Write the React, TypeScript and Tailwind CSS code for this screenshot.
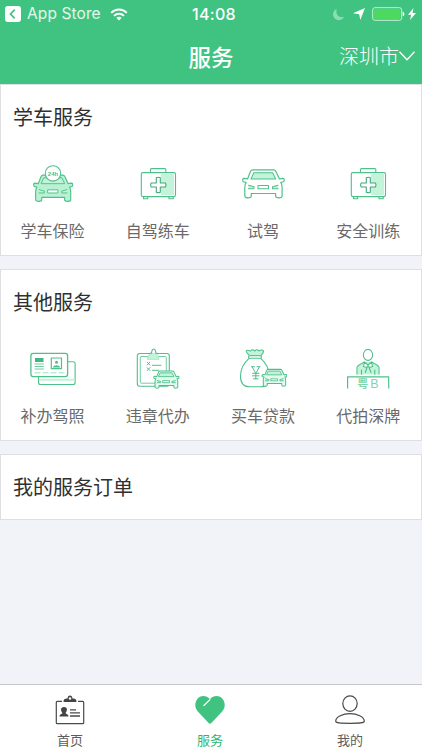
import React from 'react';

interface Service {
  label: string;
  icon: React.ReactNode;
}

const GREEN = '#4fc08c';
const PALE = '#c3f3d9';

function IconBox({ children }: { children: React.ReactNode }) {
  return (
    <svg
      viewBox="0 0 48 48"
      className="w-12 h-12"
      fill="none"
      stroke={GREEN}
      strokeWidth="1.1"
      strokeLinecap="round"
      strokeLinejoin="round"
    >
      {children}
    </svg>
  );
}

function Car({ transform, body = '#fff', width = 1.2 }: { transform?: string; body?: string; width?: number }) {
  return (
    <g transform={transform} strokeWidth={width}>
      <path
        fill={body}
        d="M13.5 9.8h21.2c1 0 1.6.4 2 1.3l3.7 7.8 3.7-.6c1.5 0 1.5 3.5 0 3.7l-2.3.4c1 1.5 1.3 3 1.3 5v8.600c0 2.400-6.500 2.400-6.500 0v-2.500H12.300v2.500c0 2.400-6.500 2.400-6.500 0v-8.600c0-2 .3-3.5 1.3-5l-2.3-.4c-1.5-.2-1.5-3.7 0-3.7l3.700.6 3.200-7.800c.4-.9.800-1.300 1.800-1.300z"
      />
      <path fill={PALE} strokeWidth={width * 0.85} d="M14.8 12.7h18.800l3.200 6.200H12z" />
      <path fill={PALE} strokeWidth={width * 0.85} d="M9.500 25.300l5.500 1.500v2H9.300M39 25.300l-5.500 1.500v2h5.700" />
      <path fill="#fff" strokeWidth={width * 0.85} d="M19 25.500h10.500v3.300H19z" />
    </g>
  );
}

function InsuranceIcon() {
  return (
    <IconBox>
      <Car transform="translate(1.2 5.9) scale(.94)" body="#b9f2d3" />
      <circle cx="24" cy="13.4" r="7.7" fill="#fff" />
      <text
        x="24"
        y="15.6"
        textAnchor="middle"
        fill={GREEN}
        stroke="none"
        className="font-['Liberation_Sans'] text-[6px] font-bold"
      >
        24h
      </text>
    </IconBox>
  );
}

function MedkitIcon() {
  return (
    <IconBox>
      <path fill={PALE} stroke="none" d="M26.800 25V14H40v21H26.800z" />
      <rect x="7.3" y="12.6" width="34.2" height="24" rx="1.5" />
      <path d="M16.500 12.500V9.600c0-.7.3-1 1-1h13.300c.7 0 1 .3 1 1v2.900M9.500 37v1.700h4.200V37M35 37v1.700h4.200V37" />
      <path
        fill="#fff"
        stroke="#45a87b"
        d="M22.300 17.800q2-1 4 0v5.200h5.200q1 2 0 4h-5.200v5.200q-2 1-4 0V27h-5.200q-1-2 0-4h5.200z"
      />
    </IconBox>
  );
}

function TestDriveIcon() {
  return (
    <IconBox>
      <Car />
    </IconBox>
  );
}

function LicenceIcon() {
  return (
    <IconBox>
      <rect x="9.5" y="16.8" width="36.6" height="22.7" rx="2" />
      <path stroke={PALE} strokeWidth="2" d="M11 34.800h34" />
      <rect x="1.9" y="8.3" width="36.7" height="23.3" rx="2.3" fill="#fff" strokeWidth="1.3" />
      <path fill="#43b783" stroke="none" d="M6 13h8.500v4H6z" />
      <path strokeWidth=".8" d="M6 19h8.500M6 21.500h8.500M6 24h8.500" />
      <rect x="22.3" y="13" width="10.2" height="10.6" strokeWidth="1.2" />
      <circle cx="27.5" cy="17.3" r="1.5" fill={GREEN} stroke="none" />
      <path fill={GREEN} stroke="none" d="M24 22.500c0-3 7-3 7 0z" />
      <path stroke="#8fe0b8" strokeWidth=".9" strokeDasharray="5 3" d="M6 27.800h29" />
    </IconBox>
  );
}

function ViolationIcon() {
  return (
    <IconBox>
      <rect x="3.3" y="8.5" width="32" height="32.7" rx="2.5" />
      <rect x="6.3" y="11.5" width="26" height="26.7" rx="1" strokeWidth=".8" />
      <path
        fill={PALE}
        stroke="#9be6c0"
        strokeWidth=".8"
        d="M13.500 14c0-3.500 2.500-5.500 4-5.800h3.500c2 .3 4 2.300 4 5.800z"
      />
      <path fill="#fff" d="M16 8.300h1.500l.3-2c.4-3 3.400-3 3.800 0l.3 2h1.500" />
      <path strokeWidth="1" d="M13.200 17.200l2.600 2.800M15.800 17.200l-2.600 2.800M13.200 22.700l2.600 2.800M15.800 22.700l-2.600 2.800M18.500 20.300h8.500M18.500 25.300h6" />
      <Car transform="translate(17.5 20.1) scale(.61)" body="#e4faee" width={1.7} />
    </IconBox>
  );
}

function LoanIcon() {
  return (
    <IconBox>
      <path
        fill="#fff"
        d="M10.300 13.200C5.500 17.500 1.500 24 1.500 31c0 8 3.500 10.800 9 10.800h11.500c5.500 0 8.300-2.800 8.300-10.800 0-7-4-13.500-8.800-17.800"
      />
      <path
        fill={PALE}
        d="M10.500 10.700c-1.300-1.500-3.900-3.500-3.200-5 1-1.300 3.200 0 4.200.3 1.300-1.600 2.700-1.600 4.200 0 1.500-1.600 2.900-1.600 4.200 0 1.300-1 4-1.500 4.500 0s-1.300 3.200-2.500 4.700z"
      />
      <rect x="9.5" y="10.7" width="13" height="2.5" rx="1.2" fill="#fff" />
      <path strokeWidth="1" d="M12.500 21.700h3M18 21.700h3M13.300 22l3.500 6.500L20.300 22M16.800 28.500v5.300M14.500 33.800h4.600M13.500 28.300h6.600M13.500 30.800h6.600" />
      <Car transform="translate(20.8 18.5) scale(.6)" body="#e4faee" width={1.7} />
    </IconBox>
  );
}

function PlateIcon() {
  return (
    <IconBox>
      <path fill={PALE} stroke="none" d="M13.500 29.500v-7.200c0-1.800 4-3.500 7-5.300h7c3 1.800 7 3.500 7 5.300v7.200z" />
      <path d="M13 29.300v-7c0-2 4.500-3.500 7.500-5.300M35 29.300v-7c0-2-4.500-3.500-7.500-5.300M17.500 25v4.300M30.800 25v4.300" />
      <ellipse cx="24" cy="9.9" rx="4.6" ry="5.5" fill="#fff" />
      <path fill="#fff" d="M20.500 17l3.500 3 3.500-3 1 4.500-3 1-1.500-1.700-1.500 1.700-3-1zM23.300 21.500l-2 6M24.700 21.500l2.300 6" />
      <path strokeWidth="1.2" strokeLinecap="butt" d="M3.600 43.500V31.800h41.100v11.700" />
      <text x="13.3" y="43" fill="#7fd5ac" stroke="none" className="font-['Noto_Sans_CJK_SC'] text-[11px] font-bold">
        粤
      </text>
      <text x="26.3" y="43.3" fill="#7fd5ac" stroke="none" className="font-['Liberation_Sans'] text-[12.5px]">
        B
      </text>
    </IconBox>
  );
}

const learning: Service[] = [
  { label: '学车保险', icon: <InsuranceIcon /> },
  { label: '自驾练车', icon: <MedkitIcon /> },
  { label: '试驾', icon: <TestDriveIcon /> },
  { label: '安全训练', icon: <MedkitIcon /> },
];

const others: Service[] = [
  { label: '补办驾照', icon: <LicenceIcon /> },
  { label: '违章代办', icon: <ViolationIcon /> },
  { label: '买车贷款', icon: <LoanIcon /> },
  { label: '代拍深牌', icon: <PlateIcon /> },
];

function ServiceCard({ title, items }: { title: string; items: Service[] }) {
  return (
    <section className="h-[172px] bg-white border border-[#dfdfe3]">
      <h2 className="pl-3 pt-[17px] text-[20px] leading-[30px] text-[#303030]">{title}</h2>
      <div className="-ml-px mt-7 grid grid-cols-4">
        {items.map((item) => (
          <div key={item.label} className="flex flex-col items-center">
            {item.icon}
            <span className="mt-[10px] text-[16px] leading-6 text-[#6a6a6a]">{item.label}</span>
          </div>
        ))}
      </div>
    </section>
  );
}

function StatusBar() {
  return (
    <div className="flex h-7 items-center justify-between pl-[5px] pr-[6px] font-['Inter'] text-white">
      <div className="flex w-[154px] items-center">
        <svg viewBox="0 0 16 16" className="w-4 h-4">
          <rect width="16" height="16" rx="3" fill="#fff" />
          <path d="M9.700 3.700L5.500 8l4.200 4.300" fill="none" stroke="#40c381" strokeWidth="1.7" />
        </svg>
        <span className="ml-[6px] text-[15.5px] tracking-[0.1px] text-[#e2f9ec]">App Store</span>
        <svg viewBox="0 0 18 13" className="ml-[9px] h-[13px] w-[18px]" fill="none" stroke="#fff" strokeWidth="1.9">
          <path d="M1.200 4.900c4.500-4.500 11.100-4.500 15.600 0M4 7.900c2.900-2.900 7.100-2.900 10 0" />
          <path d="M9 12.500L6.300 9.700c1.600-1.400 3.800-1.400 5.400 0z" fill="#fff" stroke="none" />
        </svg>
      </div>
      <span className="ml-[3px] text-[16px] font-medium tracking-[0.3px]">14:08</span>
      <div className="flex w-[150px] items-center justify-end">
        <svg viewBox="0 0 14 14" className="w-[13px] h-[13px]">
          <path d="M5.200 1C.5 2.500-.2 8.500 3 11.400c3.300 3 8.300 2 10-1.900C7 11.200 3.400 6.300 5.200 1z" fill="#8bdcb2" />
        </svg>
        <svg viewBox="0 0 12 12" className="ml-2 w-3 h-3">
          <path d="M12 0L7.300 12 6.200 6.200 0 5.200z" fill="#fff" />
        </svg>
        <svg viewBox="0 0 33 14" className="ml-[7px] h-[14px] w-[33px]">
          <rect x=".7" y=".7" width="29" height="12.6" rx="2.2" fill="none" stroke="#c4f0d7" strokeWidth="1" />
          <rect x="2" y="2" width="26.5" height="10" rx="1" fill="#4cd95f" />
          <path d="M30.700 4.800c2.200.2 2.200 4.200 0 4.400z" fill="#fff" />
        </svg>
        <svg viewBox="0 0 8 12" className="ml-[3px] h-3 w-2">
          <path d="M5.500 0L0 6.700h3.200L2 12l6-7H4.600z" fill="#fff" />
        </svg>
      </div>
    </div>
  );
}

function HomeTabIcon() {
  return (
    <svg viewBox="0 0 30 30" className="w-[30px] h-[30px]" fill="none" stroke="#4a4a4a" strokeWidth="1.2">
      <path d="M7 6.400H2.300c-.7 0-1 .3-1 1v20.300c0 .7.300 1 1 1h25.400c.7 0 1-.3 1-1V7.400c0-.7-.3-1-1-1H23" />
      <path
        fill="#444"
        stroke="none"
        fillRule="evenodd"
        d="M8.500 6.900c0-2.600 1.300-3.500 3-3.500h1C12.700 1.500 13.500.5 15 .5s2.300 1 2.500 2.900h1c1.700 0 3 .9 3 3.500zM15 2.200a1.300 1.300 0 100 2.600 1.300 1.300 0 000-2.600z"
      />
      <path fill="#444" stroke="none" d="M9 12.100c4 0 3.300 4 1.500 6 .2 1 3 1 3 3.400h-9c0-2.400 2.800-2.400 3-3.400-1.800-2-2.500-6 1.500-6z" />
      <path strokeWidth="1.3" d="M15 14.800h6M15 17.900h10M15 21h10" />
    </svg>
  );
}

function HeartTabIcon() {
  return (
    <svg viewBox="0 0 30 30" className="w-[30px] h-[30px]">
      <path
        d="M13.600 28L2.600 16.200C-.4 13-.4 7.500 2.200 4.200 5 .3 11.300-.2 15 4.200 18.700-.2 25 .3 27.800 4.200c2.600 3.300 2.600 8.800-.4 12L16.400 28c-.9.900-1.900.9-2.800 0z"
        fill="#40c381"
      />
      <path d="M8.500 10.900l6.700-6.500" stroke="#fff" strokeWidth="1.3" />
    </svg>
  );
}

function MineTabIcon() {
  return (
    <svg viewBox="0 0 30 30" className="w-[30px] h-[30px]" fill="none" stroke="#4a4a4a" strokeWidth="1.2">
      <ellipse cx="15" cy="8.6" rx="7.2" ry="7.7" />
      <path d="M.7 26.300c0-4.800 7.300-7.600 14.300-7.600s14.300 2.800 14.300 7.600c0 1.700-4.300 2-14.300 2s-14.300-.3-14.300-2z" />
    </svg>
  );
}

const tabs = [
  { label: '首页', icon: <HomeTabIcon />, active: false },
  { label: '服务', icon: <HeartTabIcon />, active: true },
  { label: '我的', icon: <MineTabIcon />, active: false },
];

export default function App() {
  return (
    <div className="flex h-[750px] w-[422px] flex-col overflow-hidden bg-[#f2f3f8] font-['Noto_Sans_CJK_SC',sans-serif]">
      <header className="h-[84px] shrink-0 bg-[#40c381] text-white">
        <StatusBar />
        <div className="grid h-[55px] grid-cols-3 items-center">
          <span />
          <h1 className="text-center text-[22.5px] font-medium leading-8">服务</h1>
          <button className="flex items-center justify-end pr-[7px] text-[20px] font-light leading-8">
            深圳市
            <svg viewBox="0 0 16 10" className="h-[10px] w-4" fill="none" stroke="#fff" strokeWidth="1.3">
              <path d="M.5.7L8 8.700 15.500.7" />
            </svg>
          </button>
        </div>
      </header>

      <main className="flex flex-1 flex-col gap-[13px]">
        <ServiceCard title="学车服务" items={learning} />
        <ServiceCard title="其他服务" items={others} />
        <section className="flex h-[66px] items-center border border-[#dfdfe3] bg-white pl-3">
          <h2 className="text-[20px] leading-[30px] text-[#303030]">我的服务订单</h2>
        </section>
      </main>

      <nav className="grid h-[66px] shrink-0 grid-cols-3 border-t border-[#c6c7cc] bg-white pr-[2px]">
        {tabs.map((tab) => (
          <div key={tab.label} className="flex flex-col items-center pt-[10px]">
            {tab.icon}
            <span className={`mt-[5px] text-[13px] leading-5 ${tab.active ? 'text-[#31b573]' : 'text-[#5c5c5c]'}`}>
              {tab.label}
            </span>
          </div>
        ))}
      </nav>
    </div>
  );
}
